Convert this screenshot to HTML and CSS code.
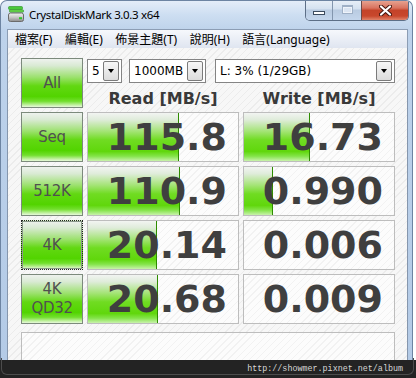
FILE: index.html
```html
<!DOCTYPE html>
<html lang="zh-Hant">
<head>
  <meta charset="UTF-8" />
  <meta name="viewport" content="width=device-width, initial-scale=1.0"/>
  <title>CrystalDiskMark 3.0.3 x64</title>
  <link rel="stylesheet" href="styles.css">
</head>
<body>
  <div class="window">
    <div class="titlebar">
      <svg class="app-icon" width="16" height="16" viewBox="0 0 16 16">
        <defs>
          <linearGradient id="disk" x1="0" y1="0" x2="0" y2="1">
            <stop offset="0" stop-color="#f4f4f4"/>
            <stop offset="0.5" stop-color="#c8c8c8"/>
            <stop offset="1" stop-color="#8c8c8c"/>
          </linearGradient>
        </defs>
        <rect x="0.5" y="0.5" width="14" height="3" rx="1" fill="#49c93a" stroke="#2d8f22" stroke-width="0.6"/>
        <rect x="1.5" y="3.8" width="14" height="2.4" rx="0.8" fill="#6bd84e" stroke="#2d8f22" stroke-width="0.6"/>
        <rect x="0.5" y="7" width="15" height="8.5" rx="2" fill="url(#disk)" stroke="#6b6b6b"/>
        <rect x="11" y="11.2" width="3" height="2" fill="#30c52a"/>
      </svg>
      <span class="title">CrystalDiskMark 3.0.3 x64</span>
      <div class="caption-buttons">
        <span class="cap-btn cap-min"><i></i></span>
        <span class="cap-btn cap-max"><i></i></span>
        <span class="cap-btn cap-close">
          <svg width="13" height="11" viewBox="0 0 13 11">
            <path d="M2 1.5 L11 9.5 M11 1.5 L2 9.5" stroke="#4a1a12" stroke-width="4.2" stroke-linecap="round"/>
            <path d="M2 1.5 L11 9.5 M11 1.5 L2 9.5" stroke="#fff" stroke-width="2.2" stroke-linecap="round"/>
          </svg>
        </span>
      </div>
    </div>

    <ul class="menubar">
      <li>檔案(F)</li>
      <li>編輯(E)</li>
      <li>佈景主題(T)</li>
      <li>說明(H)</li>
      <li>語言(Language)</li>
    </ul>

    <div class="client">
      <div class="grid">
        <button class="test-btn">All</button>
        <div class="controls">
          <div class="settings">
            <div class="combo combo-count"><span>5</span><i class="arrow"></i></div>
            <div class="combo combo-size"><span>1000MB</span><i class="arrow"></i></div>
            <div class="combo combo-drive"><span>L: 3% (1/29GB)</span><i class="arrow"></i></div>
          </div>
          <div class="heads">
            <span>Read [MB/s]</span>
            <span>Write [MB/s]</span>
          </div>
        </div>

        <button class="test-btn">Seq</button>
        <div class="cell"><div class="bar" style="width:91px"></div><span class="num">115.8</span></div>
        <div class="cell"><div class="bar" style="width:66px"></div><span class="num">16.73</span></div>

        <button class="test-btn">512K</button>
        <div class="cell"><div class="bar" style="width:92px"></div><span class="num">110.9</span></div>
        <div class="cell"><div class="bar" style="width:29px"></div><span class="num">0.990</span></div>

        <button class="test-btn focused">4K</button>
        <div class="cell"><div class="bar" style="width:69px"></div><span class="num">20.14</span></div>
        <div class="cell"><span class="num">0.006</span></div>

        <button class="test-btn two-line">4K<br>QD32</button>
        <div class="cell"><div class="bar" style="width:70px"></div><span class="num">20.68</span></div>
        <div class="cell"><span class="num">0.009</span></div>
      </div>

      <div class="comment"></div>
    </div>
  </div>

  <div class="watermark">http://showmer.pixnet.net/album</div>
</body>
</html>
```

FILE: styles.css
```css
* {
  box-sizing: border-box;
}

html, body {
  margin: 0;
  height: 378px;
  overflow: hidden;
}

body {
  position: relative;
  background: #fff;
  font-family: "Noto Sans", "Noto Sans CJK TC", sans-serif;
  color: #000;
}

.window {
  width: 413px;
  height: 378px;
  overflow: hidden;
  border: 1px solid #6d84a2;
  border-bottom: none;
  border-radius: 7px 7px 0 0;
  background: linear-gradient(to bottom, #e4edf8 0, #cddef1 14px, #bdd2eb 30px, #b3cae6 100%);
  padding: 0 4px 0 6px;
  display: flex;
  flex-direction: column;
}

/* title bar */

.titlebar {
  height: 28px;
  display: flex;
  align-items: center;
  flex-shrink: 0;
}

.app-icon {
  margin-left: 1px;
  margin-top: -2px;
}

.title {
  margin-left: 5px;
  margin-top: -2px;
  font-size: 11.5px;
  letter-spacing: -0.35px;
  color: #000;
}

.caption-buttons {
  margin-left: auto;
  margin-right: -1px;
  align-self: flex-start;
  margin-top: -1px;
  display: flex;
  height: 21px;
  border: 1px solid #5d6f87;
  border-top: none;
  border-radius: 0 0 5px 5px;
  overflow: hidden;
}

.cap-btn {
  display: flex;
  align-items: center;
  justify-content: center;
  height: 100%;
  background: linear-gradient(to bottom, #e9f0f8 0, #d4e1f0 45%, #b9cbe1 50%, #c4d6ec 100%);
}

.cap-min {
  width: 27px;
  border-right: 1px solid #8396ae;
}

.cap-min i {
  display: block;
  width: 12px;
  height: 4px;
  margin-top: 6px;
  background: #fff;
  border: 1px solid #3c4b5e;
}

.cap-max {
  width: 29px;
  border-right: 1px solid #6d4a48;
}

.cap-max i {
  display: block;
  width: 11px;
  height: 9px;
  margin-top: -1px;
  border: 1px solid #9fb0c6;
  border-top-width: 2px;
  background: #dbe5f2;
  box-shadow: inset 0 0 0 1px #eef3fa;
}

.cap-close {
  width: 46px;
  background: linear-gradient(to bottom, #e8a896 0, #d9735f 40%, #c44329 52%, #c8472c 80%, #e0836a 100%);
}

/* menu */

.menubar {
  list-style: none;
  margin: 0;
  padding: 0 0 0 7px;
  height: 19px;
  display: flex;
  align-items: center;
  gap: 12.5px;
  flex-shrink: 0;
  border: 1px solid #8c9db4;
  border-bottom: none;
  background: linear-gradient(to bottom, #f6f8fc, #dfe5f0);
  font-size: 12px;
  color: #000;
}

.menubar li {
  line-height: 17px;
}

/* client area */

.client {
  flex: 1;
  min-height: 0;
  border-left: 1px solid #8596ad;
  border-right: 1px solid #8596ad;
  padding: 10px 0 0 13px;
  background-color: #f7f7f7;
  background-image: repeating-linear-gradient(135deg, transparent 0 4px, #ececec 4px 5px);
}

.grid {
  display: grid;
  grid-template-columns: 62px 152px 152px;
  grid-auto-rows: 50px;
  gap: 4px;
}

.test-btn {
  margin: 0;
  padding: 0;
  border: 1px solid #7c8a7c;
  font-family: "DejaVu Sans", sans-serif;
  font-size: 15px;
  letter-spacing: -0.3px;
  line-height: 19px;
  color: #505050;
  background: linear-gradient(to bottom, #eef2ee 0%, #d9ead3 14%, #9ce16e 38%, #62d812 56%, #52d400 78%, #72df2e 88%, #c4f1a4 96%, #e6f9da 100%);
}

.test-btn.focused {
  border: 1px dotted #222;
  box-shadow: inset 0 0 0 1px #8a988a;
}

.controls {
  grid-column: 2 / 4;
  display: flex;
  flex-direction: column;
}

.settings {
  display: flex;
  height: 24px;
  margin-top: 1px;
}

.combo {
  display: flex;
  align-items: center;
  height: 24px;
  padding: 0 2px 0 4px;
  border: 1px solid #848484;
  background: #fff;
  font-family: "DejaVu Sans", sans-serif;
  font-size: 12px;
  color: #000;
}

.combo span {
  flex: 1;
}

.combo-count {
  width: 35px;
}

.combo-size {
  width: 77px;
  margin-left: 7px;
}

.combo-drive {
  width: 180px;
  margin-left: auto;
}

.arrow {
  width: 16px;
  height: 20px;
  border: 1px solid #7b7b7b;
  border-radius: 2px;
  background: linear-gradient(to bottom, #f7f7f7, #dcdcdc);
  display: flex;
  align-items: center;
  justify-content: center;
}

.arrow::after {
  content: "";
  border-left: 3.5px solid transparent;
  border-right: 3.5px solid transparent;
  border-top: 4px solid #000;
}

.heads {
  display: grid;
  grid-template-columns: 152px 152px;
  gap: 4px;
  margin-top: 7px;
  font-family: "DejaVu Sans", sans-serif;
  font-weight: bold;
  font-size: 16px;
  line-height: 18px;
  color: #393939;
  text-align: center;
}

.cell {
  display: grid;
  border: 1px solid #bdbdbd;
  background-color: #fcfcfc;
  background-image: repeating-linear-gradient(135deg, transparent 0 4px, #f2f2f2 4px 5px);
}

.bar,
.num {
  grid-area: 1 / 1;
}

.bar {
  justify-self: start;
  border-right: 1px solid #2e8c00;
  background: linear-gradient(to bottom, #f2f4f2 0%, #dfecda 14%, #a4e476 38%, #70dc22 56%, #60d70c 80%, #84e44a 90%, #c9f2ac 100%);
}

.num {
  justify-self: end;
  align-self: center;
  padding-right: 11px;
  font-family: "DejaVu Sans", sans-serif;
  font-weight: bold;
  font-size: 38px;
  line-height: 38px;
  color: #3f3f3f;
}

.comment {
  width: 374px;
  height: 52px;
  margin-top: 8px;
  border: 1px solid #bdbdbd;
  background-color: #fcfcfc;
  background-image: repeating-linear-gradient(135deg, transparent 0 4px, #f2f2f2 4px 5px);
}

/* watermark strip over the bottom of the shot */

.watermark {
  position: absolute;
  left: 0;
  right: 0;
  bottom: 0;
  height: 18px;
  padding-right: 13px;
  background: #232323;
  color: #d6d6d6;
  font-family: "Liberation Mono", monospace;
  font-size: 8.4px;
  line-height: 18px;
  text-align: right;
}

.watermark::before {
  content: "";
  position: absolute;
  left: 1px;
  width: 411px;
  bottom: 3px;
  height: 16px;
  border: 1px solid #4c4c4c;
  border-top: none;
  border-radius: 0 0 6px 6px;
}
```
